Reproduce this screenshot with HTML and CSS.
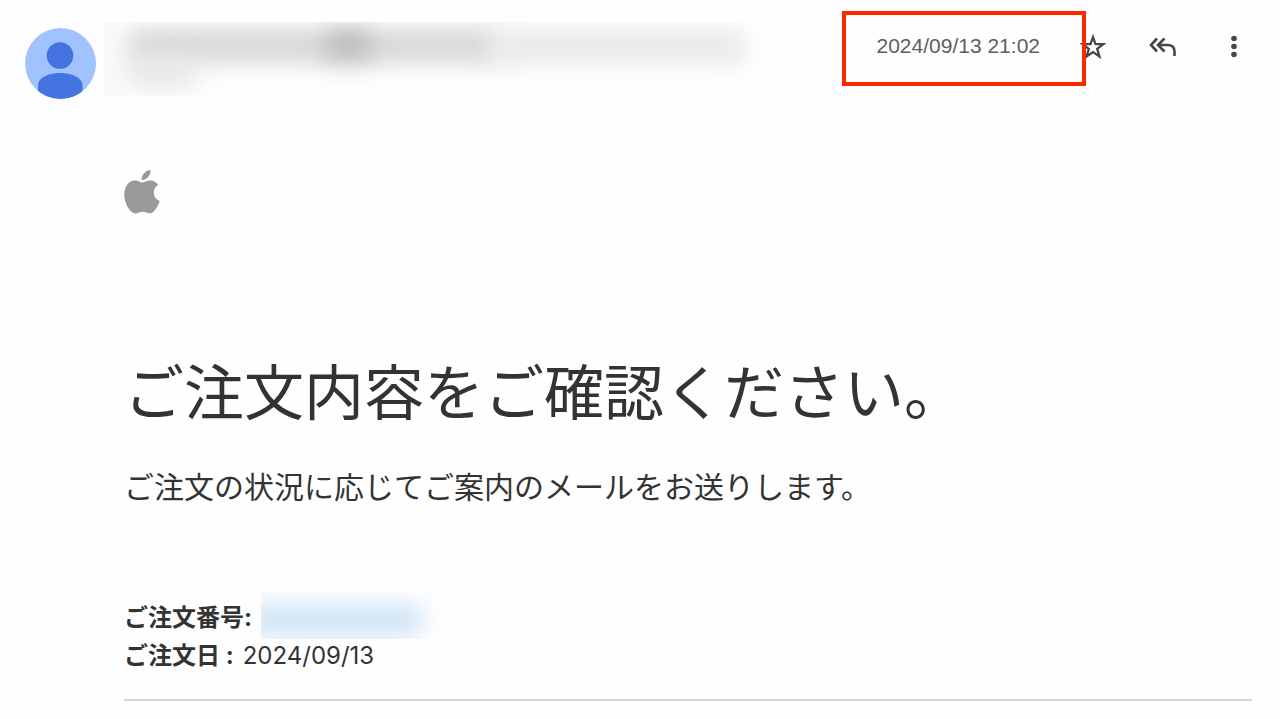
FILE: index.html
```html
<!DOCTYPE html>
<html lang="ja">
<head>
    <meta charset="UTF-8">
    <meta name="viewport" content="width=device-width, initial-scale=1.0">
    <title>ご注文内容をご確認ください。</title>
    <link rel="stylesheet" href="styles.css">
</head>
<body>
    <header class="header">
        <svg class="avatar" viewBox="0 0 71 71" aria-hidden="true">
            <defs>
                <clipPath id="round"><circle cx="35.5" cy="35.5" r="35.5"/></clipPath>
            </defs>
            <g clip-path="url(#round)">
                <rect width="71" height="71" fill="#a0c3ff"/>
                <circle cx="35" cy="27.5" r="13.3" fill="#4374e0"/>
                <path d="M13 72V58C13 49 24 45 35 45S57.5 49 57.5 58V72Z" fill="#4374e0"/>
            </g>
        </svg>
        <!-- 差出人はぼかし -->
        <div class="sender">
            <div class="smear name"></div>
            <div class="smear dark"></div>
            <div class="smear address"></div>
            <div class="smear to"></div>
        </div>
        <div class="actions">
            <time class="date" datetime="2024-09-13T21:02">2024/09/13 21:02</time>
            <button type="button" aria-label="スター">
                <svg width="28" height="28" viewBox="0 0 28 28">
                    <path d="M14 4.2L16.5 11.1L24.3 11.2L18.2 15.9L20.4 23.5L14 19.1L7.6 23.5L9.8 15.9L3.7 11.2L11.5 11.1Z" fill="none" stroke="#444746" stroke-width="2.3"/>
                </svg>
            </button>
            <button type="button" aria-label="全員に返信">
                <svg width="28" height="28" viewBox="0 0 28 28" fill="none" stroke="#444746" stroke-width="2.6">
                    <path d="M8 5.5L2 12L8 18.5M15.5 5.5L9 12L15.5 18.5M9.5 12H18.5C23.5 12 25.5 14.5 25.5 18.5V23"/>
                </svg>
            </button>
            <button type="button" aria-label="その他">
                <svg width="28" height="28" viewBox="0 0 28 28" fill="#444746">
                    <circle cx="15" cy="5.5" r="2.8"/>
                    <circle cx="15" cy="13.5" r="2.8"/>
                    <circle cx="15" cy="21.5" r="2.8"/>
                </svg>
            </button>
        </div>
    </header>

    <main class="mail">
        <svg class="logo" viewBox="0 0 36 44" role="img" aria-label="Apple">
            <path d="M26.5 0C27 5.5 22.5 10.2 17.6 10C17.2 5 21.7 .5 26.5 0Z"/>
            <path d="M18.2 12.6C20.2 12.6 22.6 10.4 26.3 10.4C29.6 10.4 32.4 12 34.2 14.7C27.6 18.7 28.7 28.3 35.7 31C34.2 35.4 30.4 43.4 25.8 43.4C23.4 43.4 21.6 41.8 18.7 41.8C15.7 41.8 13.6 43.5 11.4 43.5C6.3 43.5 .3 33.7 .3 24.8C.3 15.8 5.5 10.6 10.9 10.6C14.1 10.6 16.4 12.6 18.2 12.6Z"/>
        </svg>
        <h1>ご注文内容をご確認ください。</h1>
        <p class="lead">ご注文の状況に応じてご案内のメールをお送りします。</p>
        <div class="order">
            <div class="row"><strong>ご注文番号:</strong><span class="number"><span class="smear digits"></span></span></div>
            <div class="row"><strong>ご注文日 :</strong> 2024/09/13</div>
        </div>
        <hr>
    </main>
</body>
</html>
```

FILE: styles.css
```css
* {
    box-sizing: border-box;
}

body {
    margin: 0;
    background-color: #fefefe;
    color: #333;
    font-family: Inter, "Noto Sans CJK JP", sans-serif;
}

.header {
    display: flex;
    align-items: flex-start;
    padding: 11px 12px 0 25px;
}

.avatar {
    flex: none;
    margin-top: 17px;
    width: 71px;
    height: 71px;
}

.sender {
    position: relative;
    flex: 1;
    margin: 11px 0 0 8px;
    height: 74px;
    background: linear-gradient(90deg, #f9f9fb, #fefefe 24px);
    overflow: hidden;
}

/* ぼかした文字 */
.smear {
    position: absolute;
    filter: blur(12px);
}

.name {
    top: 8px;
    left: 24px;
    width: 370px;
    height: 32px;
    background-color: #d4d4d4;
}

.dark {
    top: 10px;
    left: 222px;
    width: 44px;
    height: 26px;
    background-color: #b8b8b8;
}

.address {
    top: 8px;
    left: 390px;
    width: 250px;
    height: 34px;
    background-color: #e8e8e8;
}

.to {
    top: 36px;
    left: 24px;
    width: 66px;
    height: 30px;
    background-color: #e6e6e6;
}

.actions {
    display: flex;
    align-items: center;
    height: 72px;
}

.date {
    position: relative;
    margin: 0 18px 2px 0;
    color: #5e5e5e;
    font-family: "Liberation Sans", sans-serif;
    font-size: 21px;
    line-height: 28px;
}

/* 日時を囲む赤枠 */
.date::after {
    content: "";
    position: absolute;
    top: -21px;
    right: -46px;
    bottom: -26px;
    left: -35px;
    z-index: 1;
    border: 4px solid #ff2600;
    pointer-events: none;
}

.actions button {
    display: flex;
    justify-content: center;
    align-items: center;
    padding: 0;
    width: 70px;
    height: 70px;
    border: 0;
    background: none;
}

.mail {
    padding: 71px 28px 0 124px;
}

.logo {
    display: block;
    width: 36px;
    height: 44px;
    fill: #999;
}

h1 {
    margin: 134px 0 0;
    font-size: 60px;
    font-weight: 400;
    line-height: 90px;
}

.lead {
    margin: 27px 0 0;
    font-size: 30px;
    line-height: 44px;
}

.order {
    margin-top: 90px;
    font-size: 24px;
    line-height: 38px;
}

.row {
    display: flex;
    gap: 9px;
}

.number {
    position: relative;
    margin: -8px 0 -2px;
    width: 180px;
    height: 48px;
    overflow: hidden;
}

.digits {
    top: 16px;
    left: -10px;
    width: 170px;
    height: 26px;
    background-color: #c6def4;
}

hr {
    margin: 24px 0 0;
    border: 0;
    border-top: 2px solid #d6d6d6;
}
```
